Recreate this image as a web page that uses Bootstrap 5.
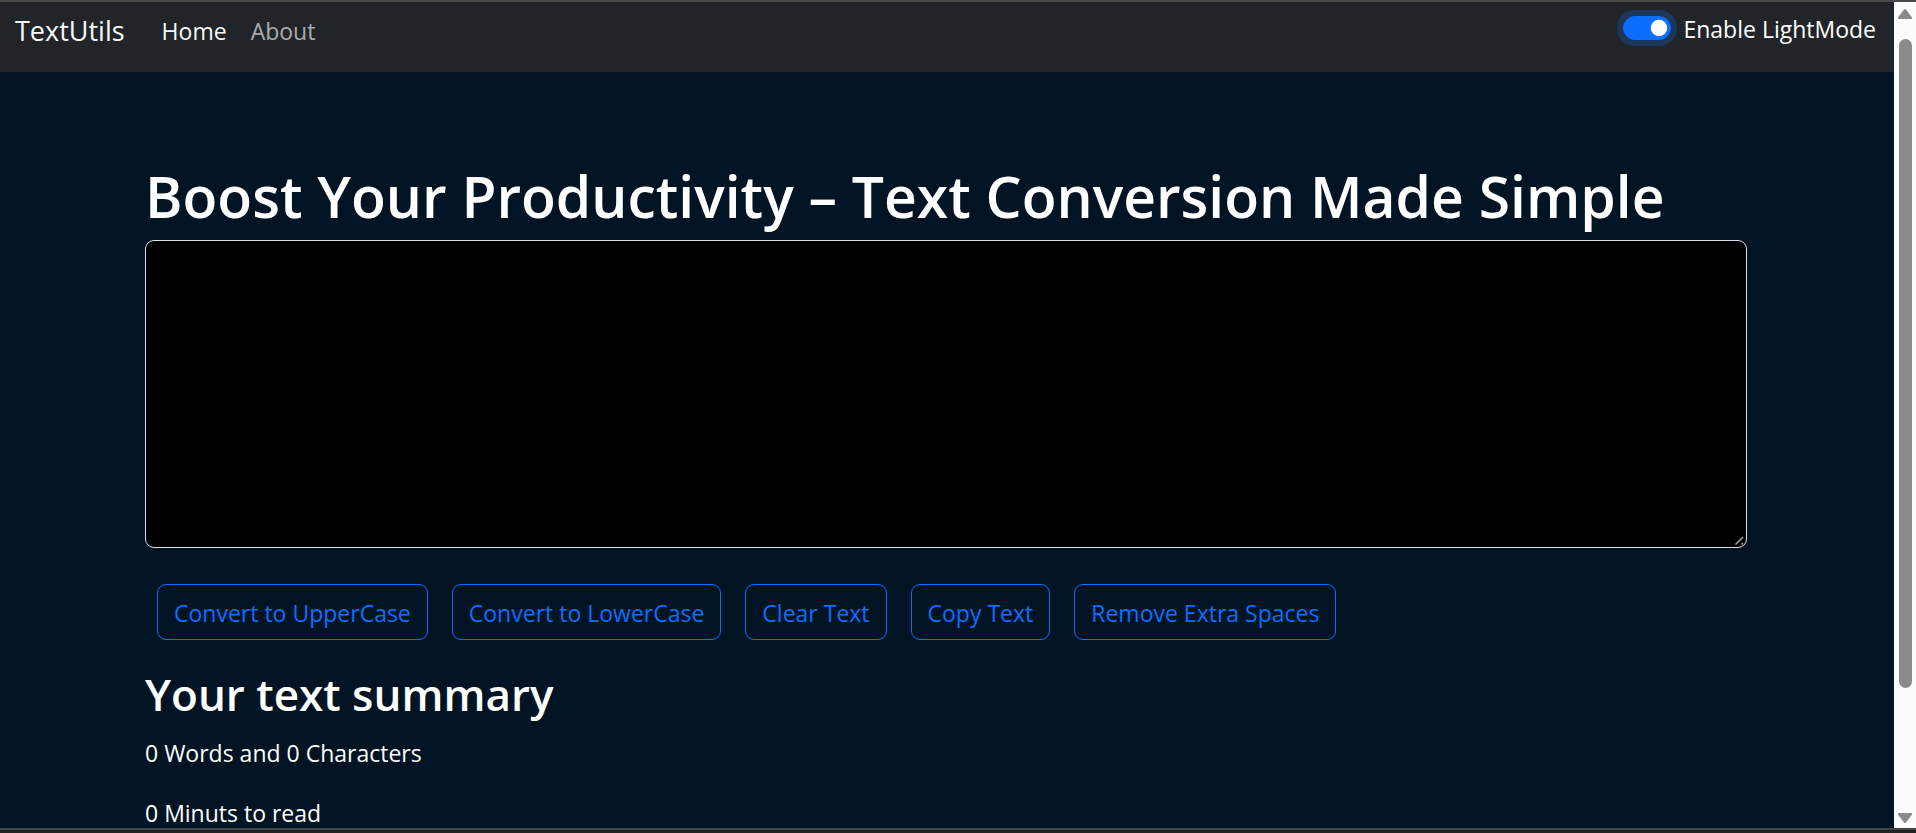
<!DOCTYPE html>
<html lang="en">
<head>
<meta charset="utf-8">
<meta name="viewport" content="width=device-width, initial-scale=1">
<title>TextUtils</title>
<link href="https://cdn.jsdelivr.net/npm/bootstrap@5.3.0/dist/css/bootstrap.min.css" rel="stylesheet">
<style>
  html { font-size: 24px; }
  body { font-family: "Open Sans", "Noto Sans", sans-serif; font-size: 23px; line-height: 36px; background: #011424; color: #fff; }
  .frame-top { height: 2px; background: #4a4a4a; }
  .frame-bottom { height: 5px; background: #222; border-top: 2px solid #444; }
  .topbar { background: #212529; padding: 0 0 12px; --bs-navbar-nav-link-padding-x: 12px; }
  .topbar .container-fluid { padding: 0 18px 0 15px; }
  .topbar .navbar-brand { font-size: 27px; line-height: 40px; margin-right: 25px; }
  .topbar .nav-link { font-size: 23px; line-height: 34px; }
  .mode-switch { margin: 0 0 4px; }
  .mode-switch .form-check-input { font-size: 24px; }
  .mode-switch .form-check-input:checked { box-shadow: 0 0 0 6px rgba(13, 110, 253, .25); }
  .mode-switch .form-check-label { line-height: 38px; }
  .page-column { max-width: 1604px; padding: 88px 2px 0 0; }
  h1 { font-size: 57px; line-height: 72px; font-weight: 600; margin: 0 0 8px; white-space: nowrap; }
  h2 { font-size: 44px; line-height: 58px; font-weight: 600; margin: 25px 0 12px; }
  .editor, .editor:focus { background: #000; color: #fff; line-height: 36px; }
  .editor::-webkit-resizer { background: url("data:image/svg+xml,%3Csvg xmlns='http://www.w3.org/2000/svg' width='15' height='15'%3E%3Cpath d='M4.500 12.500L12 5M10.500 12.500L12 11' stroke='%23aaa' stroke-width='1.500'/%3E%3C/svg%3E") no-repeat; }
  .tools { padding: 36px 12px 0; gap: 24px; }
  .tools .btn { font-size: 23px; line-height: 36px; padding: 10px 16px 8px; }
  .scrollrail { width: 22px; background: #fcfcfc; padding: 6px 0 4px; }
  .scrolltrack { padding-top: 19px; }
  .scrollthumb { width: 13px; height: 84%; background: #8a8a8a; border-radius: 7px; }
</style>
</head>
<body>
<div class="vh-100 d-flex flex-column overflow-hidden">
  <div class="frame-top flex-shrink-0"></div>
  <div class="d-flex flex-grow-1 overflow-hidden">
    <div class="flex-grow-1 overflow-hidden">
      <nav class="navbar navbar-expand-lg topbar" data-bs-theme="dark">
        <div class="container-fluid">
          <a class="navbar-brand" href="#">TextUtils</a>
          <ul class="navbar-nav me-auto">
            <li class="nav-item"><a class="nav-link active" aria-current="page" href="#">Home</a></li>
            <li class="nav-item"><a class="nav-link" href="#">About</a></li>
          </ul>
          <div class="form-check form-switch mode-switch">
            <input class="form-check-input" type="checkbox" role="switch" id="modeSwitch" checked>
            <label class="form-check-label" for="modeSwitch">Enable LightMode</label>
          </div>
        </div>
      </nav>
      <main class="page-column mx-auto">
        <h1><label for="editor">Boost Your Productivity – Text Conversion Made Simple</label></h1>
        <textarea class="form-control editor" id="editor" rows="8"></textarea>
        <div class="tools d-flex flex-wrap">
          <button type="button" class="btn btn-outline-primary">Convert to UpperCase</button>
          <button type="button" class="btn btn-outline-primary">Convert to LowerCase</button>
          <button type="button" class="btn btn-outline-primary">Clear Text</button>
          <button type="button" class="btn btn-outline-primary">Copy Text</button>
          <button type="button" class="btn btn-outline-primary">Remove Extra Spaces</button>
        </div>
        <h2>Your text summary</h2>
        <p>0 Words and 0 Characters</p>
        <p>0 Minuts to read</p>
      </main>
    </div>
    <div class="scrollrail d-flex flex-column align-items-center flex-shrink-0" aria-hidden="true">
      <svg width="16" height="12" viewBox="0 0 16 12"><path d="M7 1.5Q8 .5 9 1.5L15 9.5Q15.500 11 14 11H2Q.5 11 1 9.500Z" fill="#8a8a8a"/></svg>
      <div class="scrolltrack flex-grow-1 w-100 d-flex flex-column align-items-center">
        <div class="scrollthumb"></div>
      </div>
      <svg width="16" height="12" viewBox="0 0 16 12"><path d="M7 10.500Q8 11.500 9 10.500L15 2.500Q15.500 1 14 1H2Q.5 1 1 2.500Z" fill="#8a8a8a"/></svg>
    </div>
  </div>
  <div class="frame-bottom flex-shrink-0"></div>
</div>
<script src="https://cdn.jsdelivr.net/npm/bootstrap@5.3.0/dist/js/bootstrap.bundle.min.js"></script>
</body>
</html>
